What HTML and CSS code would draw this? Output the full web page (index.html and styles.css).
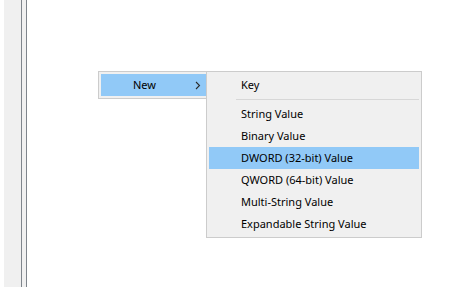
FILE: index.html
```html
<!DOCTYPE html>
<html lang="en">
<head>
    <meta charset="UTF-8">
    <title>Registry Editor - New</title>
    <link rel="stylesheet" href="styles.css">
</head>
<body>
    <div class="window">
        <div class="tree-pane"></div>
        <div class="splitter"></div>
        <div class="list-pane"></div>
    </div>

    <div class="menu menu-new">
        <div class="item active">
            <span class="label">New</span>
            <svg class="arrow" width="6" height="9" viewBox="0 0 6 9">
                <path d="M1 1 L4.5 4.5 L1 8" fill="none" stroke="#2b2b2b" stroke-width="1.1"/>
            </svg>
        </div>
    </div>

    <div class="menu menu-sub">
        <div class="item">Key</div>
        <div class="separator"></div>
        <div class="item">String Value</div>
        <div class="item">Binary Value</div>
        <div class="item active">DWORD (32-bit) Value</div>
        <div class="item">QWORD (64-bit) Value</div>
        <div class="item">Multi-String Value</div>
        <div class="item">Expandable String Value</div>
    </div>
</body>
</html>
```

FILE: styles.css
```css
html, body {
    margin: 0;
    height: 100%;
}
body {
    background: #fff;
    font-family: 'Noto Sans', 'Open Sans', sans-serif;
    font-size: 11px;
    color: #000;
    overflow: hidden;
}
.window {
    display: flex;
    height: 100%;
    padding-left: 4px;
}
.tree-pane {
    width: 17px;
    background: #f0f0f0;
}
.splitter {
    width: 4px;
    background: #f0f0f0;
    border-left: 1px solid #7f858c;
    border-right: 1px solid #7f858c;
}
.list-pane {
    flex: 1;
    background: #fff;
}
.menu {
    position: absolute;
    background: #f0f0f0;
    border: 1px solid #cccccc;
    padding: 2px;
}
.item {
    height: 22px;
    line-height: 22px;
    padding-left: 32px;
    white-space: nowrap;
}
.item.active {
    background: #91c9f7;
}
.menu-new {
    left: 98px;
    top: 71px;
    width: 110px;
}
.menu-new .item {
    display: flex;
    align-items: center;
}
.menu-new .label {
    flex: 1;
}
.menu-new .arrow {
    margin-right: 10px;
}
.menu-sub {
    left: 206px;
    top: 71px;
    width: 210px;
}
.separator {
    height: 1px;
    background: #d7d7d7;
    margin: 3px 0 3px 27px;
}
```
